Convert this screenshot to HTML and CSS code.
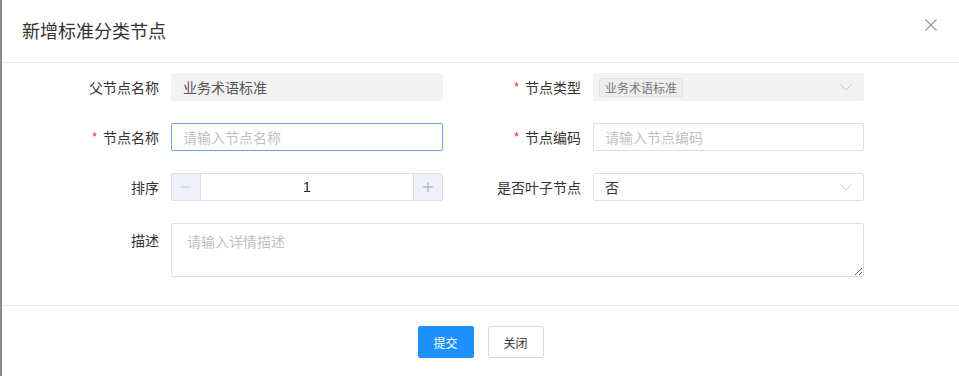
FILE: index.html
```html
<!DOCTYPE html>
<html lang="zh">
<head>
<meta charset="utf-8">
<link rel="stylesheet" href="styles.css">
</head>
<body>
<div class="modal">
  <div class="header">
    <div class="title">新增标准分类节点</div>
    <svg class="close" width="12" height="12" viewBox="0 0 12 12"><path d="M0.5 0.5L11.5 11.5M11.5 0.5L0.5 11.5" stroke="#999" stroke-width="1.2" fill="none"/></svg>
  </div>
  <div class="body">
    <div class="item">
      <label class="label">父节点名称</label>
      <div class="input disabled">业务术语标准</div>
    </div>
    <div class="item">
      <label class="label"><span class="req">*</span>节点类型</label>
      <div class="input select disabled-sel">
        <span class="tag">业务术语标准</span>
        <svg class="arrow" width="12" height="7" viewBox="0 0 12 7"><path d="M0.5 0.5L6 6L11.5 0.5" stroke="#c8c8c8" stroke-width="1" fill="none"/></svg>
      </div>
    </div>
    <div class="item">
      <label class="label"><span class="req">*</span>节点名称</label>
      <div class="input focus"><span class="ph">请输入节点名称</span></div>
    </div>
    <div class="item">
      <label class="label"><span class="req">*</span>节点编码</label>
      <div class="input"><span class="ph">请输入节点编码</span></div>
    </div>
    <div class="item">
      <label class="label">排序</label>
      <div class="number">
        <span class="step minus"><svg width="10" height="2" viewBox="0 0 10 2"><path d="M0 1H10" stroke="#c0c4cc" stroke-width="1"/></svg></span>
        <span class="num">1</span>
        <span class="step plus"><svg width="10" height="10" viewBox="0 0 10 10"><path d="M0 5H10M5 0V10" stroke="#a0a4ac" stroke-width="1"/></svg></span>
      </div>
    </div>
    <div class="item">
      <label class="label">是否叶子节点</label>
      <div class="input select">
        <span class="val">否</span>
        <svg class="arrow" width="12" height="7" viewBox="0 0 12 7"><path d="M0.5 0.5L6 6L11.5 0.5" stroke="#c8c8c8" stroke-width="1" fill="none"/></svg>
      </div>
    </div>
    <div class="item wide">
      <label class="label top">描述</label>
      <textarea class="textarea" placeholder="请输入详情描述"></textarea>
    </div>
  </div>
  <div class="footer">
    <button class="btn primary">提交</button>
    <button class="btn">关闭</button>
  </div>
</div>
</body>
</html>
```
FILE: styles.css
```css
html, body {
  margin: 0;
  padding: 0;
}
body {
  width: 959px;
  height: 376px;
  overflow: hidden;
  background: #fff;
  font-family: "Noto Sans CJK SC", "Noto Sans", sans-serif;
  color: #333;
}
.modal {
  height: 376px;
  border-left: 2px solid #8c8c8c;
  background: #fff;
  box-sizing: border-box;
}
.header {
  height: 62px;
  padding: 0 22px 0 20px;
  display: flex;
  align-items: center;
  justify-content: space-between;
  border-bottom: 1px solid #e8e8e8;
}
.title {
  font-size: 18px;
  color: #333;
  line-height: 24px;
  margin-top: -2px;
}
.close {
  margin-top: -12px;
}
.body {
  padding: 10px 0 28px 57px;
  display: grid;
  grid-template-columns: 384px 383px;
  grid-template-rows: 28px 28px 28px 54px;
  column-gap: 38px;
  row-gap: 22px;
}
.item {
  display: grid;
  grid-template-columns: 100px 1fr;
  column-gap: 12px;
  align-items: center;
  height: 28px;
}
.item.wide {
  grid-column: 1 / 3;
  align-items: start;
  height: 54px;
}
.label {
  display: flex;
  align-items: center;
  justify-content: flex-end;
  height: 28px;
  font-size: 14px;
  line-height: 20px;
  color: #333;
  white-space: nowrap;
}
.label.top {
  padding-top: 3px;
}
.req {
  color: #f5222d;
  font-size: 12px;
  line-height: 12px;
  margin-right: 6px;
  font-family: "Liberation Sans", sans-serif;
}
.input {
  height: 28px;
  box-sizing: border-box;
  border: 1px solid #dcdfe6;
  border-radius: 2px;
  padding: 0 11px;
  display: flex;
  align-items: center;
  font-size: 14px;
  color: #333;
  background: #fff;
}
.input.disabled {
  background: #f3f3f3;
  border-color: #f3f3f3;
  color: #555;
}
.input.focus {
  border-color: #6ea5dd;
}
.ph {
  color: #bfbfbf;
}
.select {
  justify-content: space-between;
}
.disabled-sel {
  background: #f3f3f3;
  border-color: #f3f3f3;
  padding-left: 5px;
}
.tag {
  font-size: 12px;
  line-height: 17px;
  padding: 0 5px;
  border: 1px solid #e2e2e2;
  background: #eeeeee;
  color: #777;
  border-radius: 2px;
}
.val {
  color: #333;
}
.number {
  height: 28px;
  box-sizing: border-box;
  border: 1px solid #dcdfe6;
  border-radius: 2px;
  display: flex;
  align-items: stretch;
  background: #fff;
}
.step {
  width: 28px;
  display: flex;
  align-items: center;
  justify-content: center;
  background: #eef1fb;
}
.minus {
  border-right: 1px solid #dcdfe6;
}
.plus {
  border-left: 1px solid #dcdfe6;
}
.num {
  flex: 1;
  display: flex;
  align-items: center;
  justify-content: center;
  font-family: "Liberation Sans", sans-serif;
  font-size: 14px;
  color: #222;
}
.textarea {
  display: block;
  width: 693px;
  height: 54px;
  box-sizing: border-box;
  border: 1px solid #dcdfe6;
  border-radius: 2px;
  padding: 6px 15px;
  font-family: "Noto Sans CJK SC", "Noto Sans", sans-serif;
  font-size: 14px;
  line-height: 22px;
  color: #333;
  margin: 0;
  outline: none;
}
.textarea::placeholder {
  color: #bfbfbf;
}
.footer {
  border-top: 1px solid #e8e8e8;
  padding-top: 20px;
  display: flex;
  justify-content: center;
  gap: 14px;
}
.btn {
  width: 56px;
  height: 32px;
  box-sizing: border-box;
  border: 1px solid #d9d9d9;
  border-radius: 2px;
  background: #fff;
  color: #333;
  font-family: "Noto Sans CJK SC", "Noto Sans", sans-serif;
  font-size: 12px;
  padding: 0;
}
.btn.primary {
  background: #1e90ff;
  border-color: #1e90ff;
  color: #fff;
}
```
